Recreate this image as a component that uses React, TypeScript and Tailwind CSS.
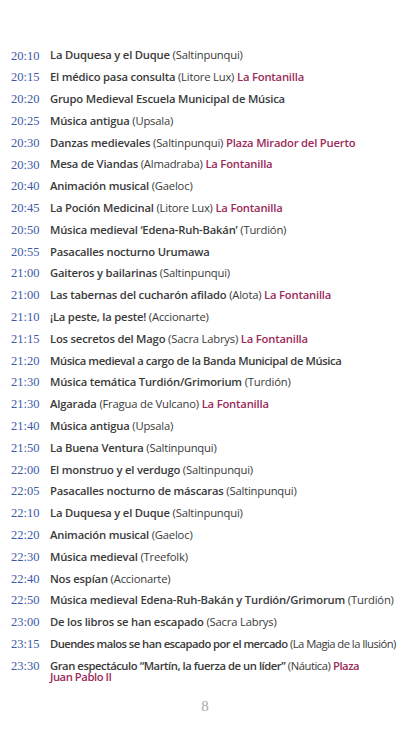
import React from "react";

type Row = { t: string; b: string; n?: string; p?: string; tight?: string };

const rows: Row[] = [
  { t: "20:10", b: "La Duquesa y el Duque", n: "(Saltinpunqui)" },
  { t: "20:15", b: "El médico pasa consulta", n: "(Litore Lux)", p: "La Fontanilla" },
  { t: "20:20", b: "Grupo Medieval Escuela Municipal de Música" },
  { t: "20:25", b: "Música antigua", n: "(Upsala)" },
  { t: "20:30", b: "Danzas medievales", n: "(Saltinpunqui)", p: "Plaza Mirador del Puerto" },
  { t: "20:30", b: "Mesa de Viandas", n: "(Almadraba)", p: "La Fontanilla" },
  { t: "20:40", b: "Animación musical", n: "(Gaeloc)" },
  { t: "20:45", b: "La Poción Medicinal", n: "(Litore Lux)", p: "La Fontanilla" },
  { t: "20:50", b: "Música medieval ‘Edena-Ruh-Bakán’", n: "(Turdión)" },
  { t: "20:55", b: "Pasacalles nocturno Urumawa" },
  { t: "21:00", b: "Gaiteros y bailarinas", n: "(Saltinpunqui)" },
  { t: "21:00", b: "Las tabernas del cucharón afilado", n: "(Alota)", p: "La Fontanilla" },
  { t: "21:10", b: "¡La peste, la peste!", n: "(Accionarte)" },
  { t: "21:15", b: "Los secretos del Mago", n: "(Sacra Labrys)", p: "La Fontanilla" },
  { t: "21:20", b: "Música medieval a cargo de la Banda Municipal de Música", tight: "tracking-[-0.4px]" },
  { t: "21:30", b: "Música temática Turdión/Grimorium", n: "(Turdión)" },
  { t: "21:30", b: "Algarada", n: "(Fragua de Vulcano)", p: "La Fontanilla" },
  { t: "21:40", b: "Música antigua", n: "(Upsala)" },
  { t: "21:50", b: "La Buena Ventura", n: "(Saltinpunqui)" },
  { t: "22:00", b: "El monstruo y el verdugo", n: "(Saltinpunqui)" },
  { t: "22:05", b: "Pasacalles nocturno de máscaras", n: "(Saltinpunqui)" },
  { t: "22:10", b: "La Duquesa y el Duque", n: "(Saltinpunqui)" },
  { t: "22:20", b: "Animación musical", n: "(Gaeloc)" },
  { t: "22:30", b: "Música medieval", n: "(Treefolk)" },
  { t: "22:40", b: "Nos espían", n: "(Accionarte)" },
  { t: "22:50", b: "Música medieval Edena-Ruh-Bakán y Turdión/Grimorum", n: "(Turdión)" },
  { t: "23:00", b: "De los libros se han escapado", n: "(Sacra Labrys)" },
  { t: "23:15", b: "Duendes malos se han escapado por el mercado", n: "(La Magia de la Ilusión)", tight: "tracking-[-0.55px]" },
];

const sans = { fontFamily: '"Open Sans", "Noto Sans", sans-serif' };
const serif = { fontFamily: '"Liberation Serif", "DejaVu Serif", serif' };

export default function App() {
  return (
    <div className="w-[416px] h-[742px] bg-white flex flex-col">
      <div className="pt-[45px] flex flex-col">
        {rows.map((r, i) => (
          <div key={i} className="h-[21.8px] flex items-center">
            <div className="w-[50px] pl-[11px] shrink-0 text-[12.5px] text-[#3d5aa8]" style={serif}>
              {r.t}
            </div>
            <div
              className={`text-[11.25px] text-[#3a3a3a] whitespace-nowrap ${r.tight ?? "tracking-[-0.2px]"}`}
              style={sans}
            >
              <span className="font-semibold">{r.b}</span>
              {r.n && <span> {r.n}</span>}
              {r.p && <span className="font-semibold text-[#9b2a5a]"> {r.p}</span>}
            </div>
          </div>
        ))}
        <div className="h-[21.8px] flex items-start pt-[4px]">
          <div className="w-[50px] pl-[11px] shrink-0 text-[12.5px] text-[#3d5aa8] leading-[15px]" style={serif}>
            23:30
          </div>
          <div className="text-[11.25px] tracking-[-0.45px] text-[#3a3a3a] leading-[10.5px] pt-[2px] whitespace-nowrap" style={sans}>
            <span className="font-semibold">Gran espectáculo “Martín, la fuerza de un líder”</span>
            <span> (Náutica) </span>
            <span className="font-semibold text-[#9b2a5a]">
              Plaza
              <br />
              Juan Pablo II
            </span>
          </div>
        </div>
      </div>
      <div className="mt-[18px] flex justify-center">
        <span className="text-[15px] text-[#a8a8a8] pr-[6px]" style={serif}>8</span>
      </div>
    </div>
  );
}
